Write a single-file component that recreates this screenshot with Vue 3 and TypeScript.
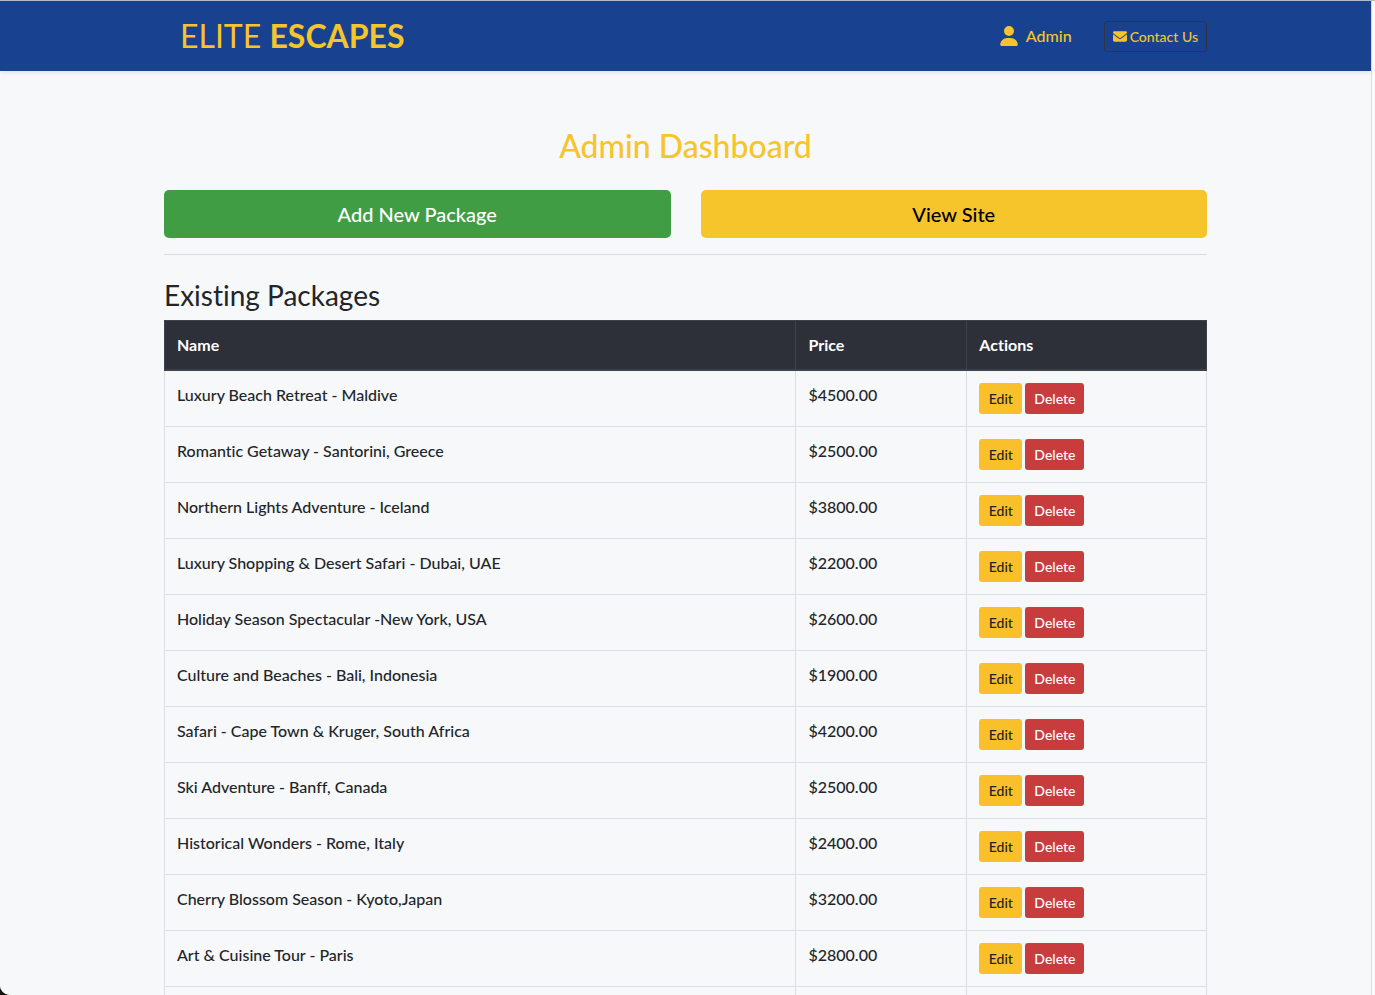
<script setup lang="ts">
interface TravelPackage {
  name: string
  price: string
}

const packages: TravelPackage[] = [
  { name: 'Luxury Beach Retreat - Maldive', price: '$4500.00' },
  { name: 'Romantic Getaway - Santorini, Greece', price: '$2500.00' },
  { name: 'Northern Lights Adventure - Iceland', price: '$3800.00' },
  { name: 'Luxury Shopping & Desert Safari - Dubai, UAE', price: '$2200.00' },
  { name: 'Holiday Season Spectacular -New York, USA', price: '$2600.00' },
  { name: 'Culture and Beaches - Bali, Indonesia', price: '$1900.00' },
  { name: 'Safari - Cape Town & Kruger, South Africa', price: '$4200.00' },
  { name: 'Ski Adventure - Banff, Canada', price: '$2500.00' },
  { name: 'Historical Wonders - Rome, Italy', price: '$2400.00' },
  { name: 'Cherry Blossom Season - Kyoto,Japan', price: '$3200.00' },
  { name: 'Art & Cuisine Tour - Paris', price: '$2800.00' },
]
</script>

<template>
  <div class="window">
    <div class="page">
      <header class="navbar">
        <div class="container nav-inner">
          <a class="brand" href="#">ELITE <strong>ESCAPES</strong></a>
          <nav class="nav-links">
            <a class="admin-link" href="#">
              <svg class="user-icon" viewBox="0 0 448 512" aria-hidden="true">
                <path d="M224 256a128 128 0 1 0 0-256 128 128 0 1 0 0 256zm-45.700 48C79.800 304 0 383.800 0 482.300 0 498.700 13.300 512 29.700 512h388.600c16.400 0 29.700-13.300 29.700-29.700C448 383.800 368.200 304 269.700 304h-91.400z" />
              </svg>
              <span>Admin</span>
            </a>
            <a class="contact" href="#">
              <svg class="mail-icon" viewBox="0 64 512 384" aria-hidden="true">
                <path d="M48 64C21.500 64 0 85.500 0 112c0 15.100 7.100 29.300 19.200 38.400l217.600 163.200c11.400 8.500 27 8.500 38.400 0l217.600-163.200c12.100-9.100 19.200-23.300 19.200-38.400 0-26.500-21.500-48-48-48H48zM0 176v208c0 35.300 28.700 64 64 64h384c35.300 0 64-28.700 64-64V176L294.400 339.200c-22.800 17.100-54 17.100-76.800 0L0 176z" />
              </svg>
              <span>Contact Us</span>
            </a>
          </nav>
        </div>
      </header>

      <main class="container">
        <h1>Admin Dashboard</h1>
        <div class="actions">
          <button type="button" class="btn-large add">Add New Package</button>
          <button type="button" class="btn-large view">View Site</button>
        </div>
        <hr />
        <h2>Existing Packages</h2>
        <table>
          <colgroup>
            <col class="col-name" />
            <col class="col-price" />
            <col class="col-actions" />
          </colgroup>
          <thead>
            <tr>
              <th scope="col">Name</th>
              <th scope="col">Price</th>
              <th scope="col">Actions</th>
            </tr>
          </thead>
          <tbody>
            <tr v-for="item in packages" :key="item.name">
              <td>{{ item.name }}</td>
              <td>{{ item.price }}</td>
              <td>
                <div class="row-actions">
                  <button type="button" class="btn-small edit">Edit</button>
                  <button type="button" class="btn-small delete">Delete</button>
                </div>
              </td>
            </tr>
            <tr>
              <td></td>
              <td></td>
              <td></td>
            </tr>
          </tbody>
        </table>
      </main>
    </div>
  </div>
</template>

<style>
html {
  background: #14140f;
}
body {
  margin: 0;
}
</style>

<style scoped>
.window {
  box-sizing: border-box;
  height: 100vh;
  overflow: hidden;
  padding-right: 3px;
  border-top: 1px solid #b4b8cf;
  border-bottom-left-radius: 10px;
  background: #fbfbfb;
  color: #212529;
  font-family: Lato, "Liberation Sans", sans-serif;
  font-size: 16px;
  font-weight: 500;
  font-variant-ligatures: none;
  line-height: 24px;
}
.page {
  min-height: 100%;
  border-right: 1px solid #dcdde1;
  background: #f7f8fa;
}
.container {
  box-sizing: border-box;
  max-width: 1043px;
  margin: 0 auto;
}
.navbar {
  background: #18428f;
  box-shadow: 0 2px 4px rgba(0, 0, 0, 0.08);
}
.nav-inner {
  display: flex;
  align-items: center;
  justify-content: space-between;
  height: 70px;
  padding-left: 16px;
}
.navbar a {
  color: #f6c42b;
  text-decoration: none;
}
.brand {
  font-size: 32px;
  font-weight: 400;
  line-height: 48px;
}
.brand strong {
  font-weight: 700;
}
.nav-links {
  display: flex;
  align-items: center;
  gap: 32px;
}
.admin-link {
  display: flex;
  align-items: center;
  gap: 8px;
}
.user-icon {
  width: 18px;
  height: 20px;
  fill: currentColor;
}
.contact {
  display: flex;
  align-items: center;
  gap: 3px;
  padding: 4px 8px;
  border: 1px solid #303440;
  border-radius: 3px;
  font-size: 14px;
  line-height: 21px;
}
.mail-icon {
  width: 14px;
  height: 11px;
  fill: currentColor;
}
h1 {
  margin: 0;
  padding-top: 56px;
  color: #f6c42b;
  font-size: 32px;
  font-weight: 500;
  line-height: 38px;
  text-align: center;
}
.actions {
  display: grid;
  grid-template-columns: 1fr 1fr;
  gap: 30px;
  margin-top: 25px;
}
button {
  border: 0;
  font-family: inherit;
  font-weight: 500;
  font-variant-ligatures: none;
}
.btn-large {
  height: 48px;
  border-radius: 5px;
  font-size: 20px;
  line-height: 30px;
}
.add {
  background: #409d44;
  color: #fff;
}
.view {
  background: #f6c42b;
  color: #000;
}
hr {
  margin: 16px 0;
  border: 0;
  border-top: 1px solid #d9dbde;
}
h2 {
  margin: 24px 0 8px;
  font-size: 28px;
  font-weight: 400;
  line-height: 33px;
}
table {
  width: 100%;
  border-collapse: collapse;
  table-layout: fixed;
}
.col-name {
  width: 60.6%;
}
.col-price {
  width: 16.4%;
}
.col-actions {
  width: 23%;
}
th,
td {
  padding: 12px;
  border: 1px solid #dbdee2;
  text-align: left;
  vertical-align: top;
}
th {
  border: 1px solid #3c434b;
  border-bottom-width: 2px;
  background: #2d3039;
  color: #fff;
  font-weight: 700;
}
.row-actions {
  display: flex;
  gap: 3px;
}
.btn-small {
  height: 31px;
  min-width: 43px;
  padding: 0 9px;
  border-radius: 3px;
  font-size: 14px;
  line-height: 21px;
}
.edit {
  background: #f9c02b;
  color: #212529;
}
.delete {
  background: #c93c3e;
  color: #fff;
}
</style>
